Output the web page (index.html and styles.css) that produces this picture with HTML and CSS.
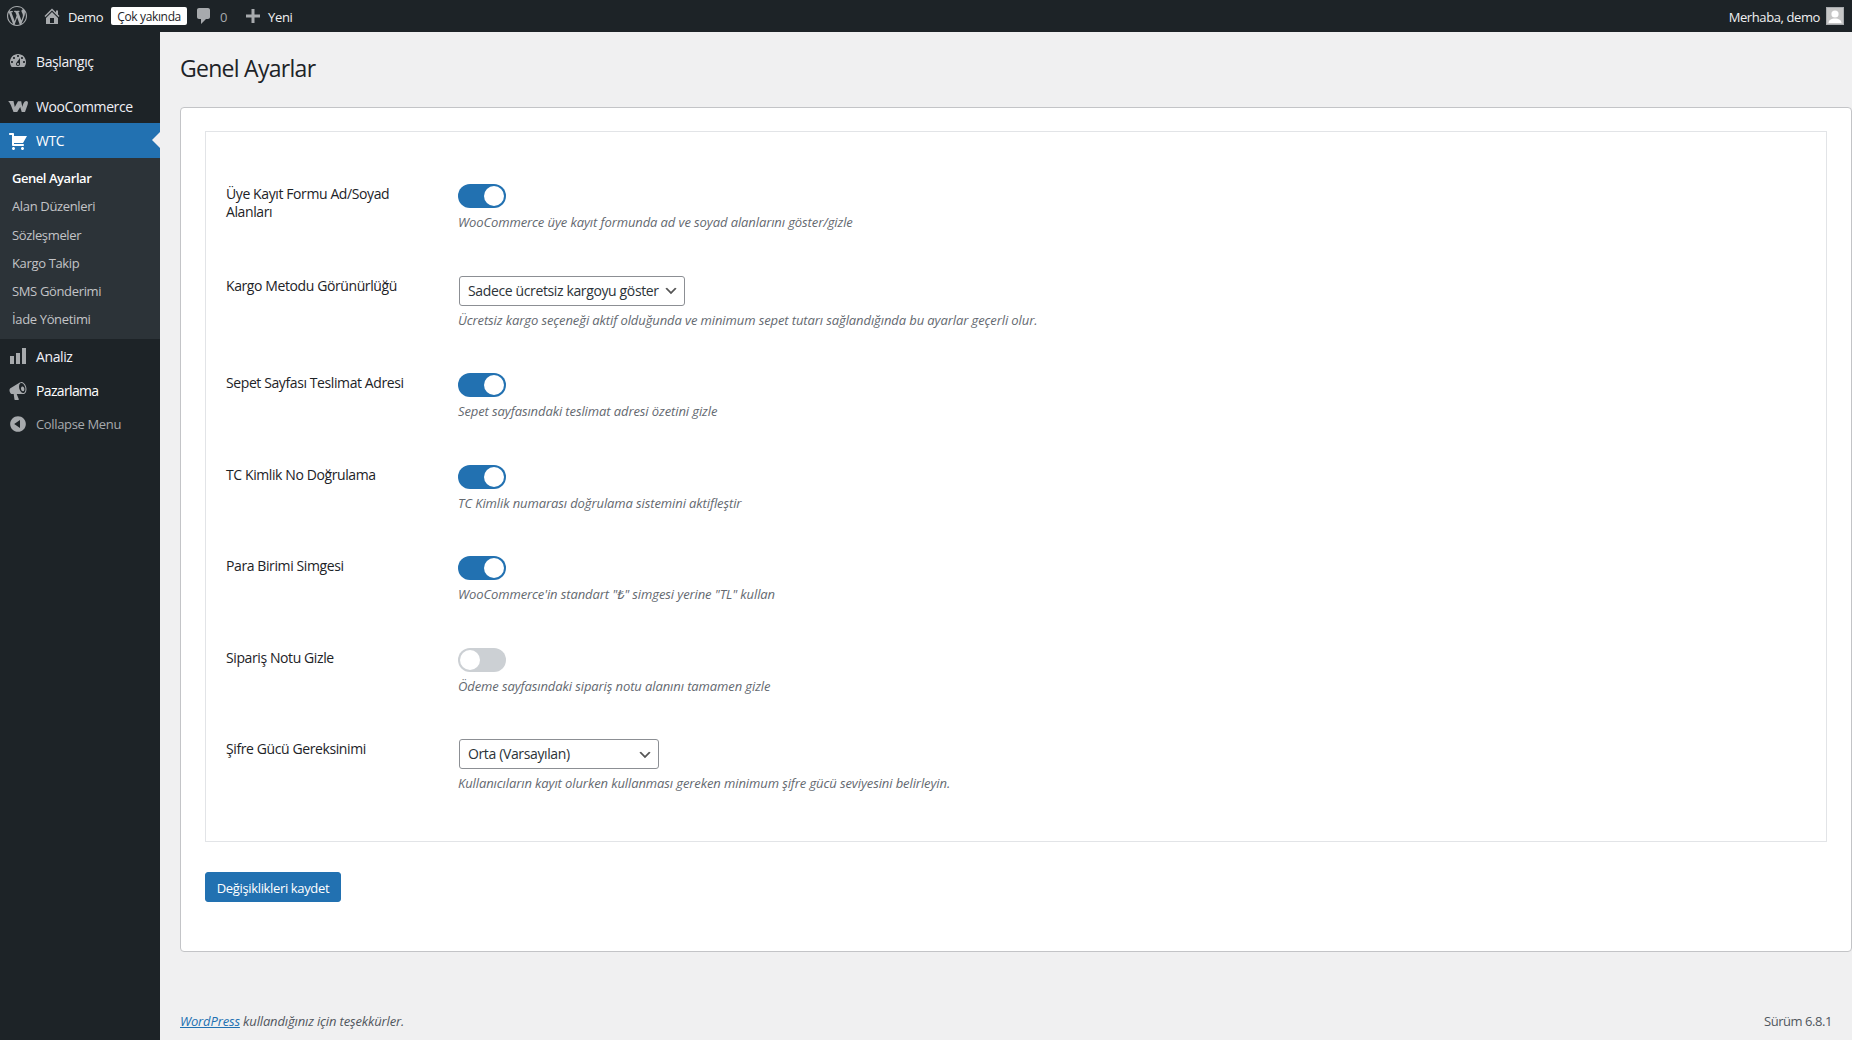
FILE: index.html
```html
<!DOCTYPE html>
<html lang="tr">
<head>
<meta charset="utf-8">
<title>Genel Ayarlar</title>
<link rel="stylesheet" href="styles.css">
</head>
<body>
<header class="adminbar">
  <div class="bar-group">
    <svg class="bar-wp" viewBox="0 0 20 20"><path d="M20 10c0-5.51-4.49-10-10-10C4.48 0 0 4.49 0 10c0 5.52 4.48 10 10 10 5.51 0 10-4.48 10-10zM7.78 15.37L4.37 6.22c.55-.02 1.17-.08 1.17-.08.5-.06.44-1.13-.06-1.11 0 0-1.45.11-2.37.11-.18 0-.37 0-.58-.01C4.12 2.69 6.87 1.11 10 1.11c2.33 0 4.45.87 6.05 2.34-.68-.11-1.65.39-1.65 1.58 0 .74.45 1.36.9 2.1.35.61.55 1.36.55 2.46 0 1.49-1.4 5-1.4 5l-3.03-8.37c.54-.02.82-.17.82-.17.5-.05.44-1.25-.06-1.22 0 0-1.44.12-2.38.12-.87 0-2.33-.12-2.33-.12-.5-.03-.56 1.2-.06 1.22l.92.08 1.26 3.41zM17.41 10c.24-.64.74-1.87.43-4.25.7 1.29 1.05 2.71 1.05 4.25 0 3.29-1.73 6.24-4.4 7.78.97-2.59 1.94-5.2 2.92-7.78zM6.1 18.09C3.12 16.65 1.11 13.53 1.11 10c0-1.3.23-2.48.72-3.59C3.25 10.3 4.67 14.2 6.1 18.09zm4.03-6.63l2.58 6.98c-.86.29-1.76.45-2.71.45-.79 0-1.57-.11-2.29-.33.81-2.38 1.62-4.74 2.42-7.1z"/></svg>
    <svg class="bar-home" viewBox="0 0 20 20"><path d="M16 8.5l1.53 1.53-1.06 1.06L10 4.62l-6.47 6.47-1.06-1.06L10 2.5l4 4v-2h2v4zm-6-2.46l6 5.99V18H4v-5.97zM12 17v-5H8v5h4z"/></svg>
    <span class="bar-demo">Demo</span>
    <span class="bar-badge">Çok yakında</span>
    <svg class="bar-comment" viewBox="0 0 20 20"><path d="M5 2h9c1.1 0 2 .9 2 2v7c0 1.1-.9 2-2 2h-2l-5 5v-5H5c-1.1 0-2-.9-2-2V4c0-1.1.9-2 2-2z"/></svg>
    <span class="bar-count">0</span>
    <svg class="bar-plus" viewBox="0 0 20 20"><path d="M17 8.5v3h-5.500V17h-3v-5.500H3v-3h5.500V3h3v5.500z"/></svg>
    <span class="bar-new">Yeni</span>
  </div>
  <div class="bar-group">
    <span class="bar-hello">Merhaba, demo</span>
    <svg class="bar-avatar" viewBox="0 0 18 18"><rect width="18" height="18" fill="#c6c6c6"/><rect x=".5" y=".5" width="17" height="17" fill="none" stroke="#a7aaad"/><circle cx="9" cy="7" r="3.6" fill="#fff"/><path d="M2.500 16c.2-3 2.600-4.600 6.500-4.600s6.300 1.600 6.500 4.600z" fill="#fff"/></svg>
  </div>
</header>
<div class="shell">
  <nav class="sidebar">
    <a class="menu-item menu-dash"><svg viewBox="0 0 20 20"><path d="M3.76 16h12.48c1.1-1.37 1.76-3.11 1.76-5 0-4.42-3.58-8-8-8s-8 3.58-8 8c0 1.89.66 3.63 1.76 5zM10 4c.55 0 1 .45 1 1s-.45 1-1 1-1-.45-1-1 .45-1 1-1zM6 6c.55 0 1 .45 1 1s-.45 1-1 1-1-.45-1-1 .45-1 1-1zm8 0c.55 0 1 .45 1 1s-.45 1-1 1-1-.45-1-1 .45-1 1-1zm-5.37 5.55L12 7v6c0 1.1-.9 2-2 2s-2-.9-2-2c0-.57.24-1.08.63-1.45zM4 10c.55 0 1 .45 1 1s-.45 1-1 1-1-.45-1-1 .45-1 1-1zm12 0c.55 0 1 .45 1 1s-.45 1-1 1-1-.45-1-1 .45-1 1-1zm-5 3c0-.55-.45-1-1-1s-1 .45-1 1 .45 1 1 1 1-.45 1-1z"/></svg><span class="menu-text">Başlangıç</span></a>
    <a class="menu-item menu-woo"><svg viewBox="0 0 20 11"><path d="M0 0h5.500l1.300 6L10 .3h3.200l1.100 5.700C15 3.500 16 0 18.300 0c1.700 0 2 1.700 1.200 4l-2.500 7h-3.300l-1.500-5-3 5H5.500L3 4.500C2.300 2.700 1.300 1 0 0z"/></svg><span class="menu-text">WooCommerce</span></a>
    <a class="menu-item menu-current"><svg viewBox="0 0 20 20"><path d="M6 13h9c.55 0 1 .45 1 1s-.45 1-1 1H5c-.55 0-1-.45-1-1V4H2c-.55 0-1-.45-1-1s.45-1 1-1h3c.55 0 1 .45 1 1v2h13l-4 7H6v1zm-.5 3c.83 0 1.500.67 1.500 1.500S6.330 19 5.500 19 4 18.330 4 17.500 4.670 16 5.500 16zm9 0c.83 0 1.500.67 1.500 1.500s-.67 1.500-1.500 1.500-1.500-.67-1.500-1.500.67-1.500 1.500-1.500z"/></svg><span class="menu-text">WTC</span></a>
    <div class="submenu">
      <a class="sub-item sub-current">Genel Ayarlar</a>
      <a class="sub-item">Alan Düzenleri</a>
      <a class="sub-item">Sözleşmeler</a>
      <a class="sub-item">Kargo Takip</a>
      <a class="sub-item">SMS Gönderimi</a>
      <a class="sub-item">İade Yönetimi</a>
    </div>
    <a class="menu-item menu-analiz"><svg viewBox="0 0 20 20"><path d="M18 18V2h-4v16h4zm-6 0V7H8v11h4zm-6 0v-8H2v8h4z"/></svg><span class="menu-text">Analiz</span></a>
    <a class="menu-item menu-white"><svg viewBox="0 0 20 20"><path d="M18.150 5.940c.46 1.620.38 3.220-.02 4.480-.42 1.280-1.260 2.180-2.300 2.480-.16.06-.26.06-.4.06l-.4.040H8.700l2.220 5.500c.02.14-.6.260-.14.340-.8.1-.24.160-.34.160H6.950c-.1 0-.26-.06-.34-.16-.08-.08-.16-.2-.14-.34l-.8-5.500H4.250c-.5.06-1.080-.18-1.540-.62s-.88-1.080-1.060-1.880c-.24-.8-.2-1.560-.02-2.200.18-.62.58-1.080 1.160-1.300l9.020-5.420c.28-.18.600-.3.920-.38 1.040-.3 2.240.1 3.220.98.980.86 1.820 2.160 2.200 3.780zm-2.580 5.980c.4-.1.740-.34 1.040-.7.580-.7.860-1.760.860-3.040 0-.64-.1-1.300-.28-1.980-.34-1.360-1.020-2.500-1.780-3.240s-1.680-1.100-2.460-.88c-.82.220-1.400.960-1.700 2-.32 1.040-.28 2.360.06 3.720.38 1.360 1 2.500 1.800 3.240.78.740 1.620 1.100 2.460.88zm-1.400-6.400c.9-.24 1.860.62 2.140 1.920.28 1.300-.2 2.520-1.100 2.760-.9.240-1.860-.62-2.140-1.920-.28-1.300.2-2.520 1.100-2.760z" fill-rule="evenodd"/></svg><span class="menu-text">Pazarlama</span></a>
    <a class="menu-item menu-collapse"><svg viewBox="0 0 20 20"><path d="M10 2.160c4.330 0 7.840 3.510 7.840 7.840s-3.510 7.840-7.840 7.840S2.160 14.330 2.160 10 5.710 2.160 10 2.160zm2 11.720V6.120L6.180 9.970z"/></svg><span class="menu-text">Collapse Menu</span></a>
  </nav>
  <div class="content">
    <h1 class="page-title">Genel Ayarlar</h1>
    <main class="panel">
      <section class="settings-box">
        <div class="row">
          <div class="row-label">Üye Kayıt Formu Ad/Soyad Alanları</div>
          <div class="row-field">
            <span class="switch switch-on"></span>
            <p class="desc">WooCommerce üye kayıt formunda ad ve soyad alanlarını göster/gizle</p>
          </div>
        </div>
        <div class="row">
          <div class="row-label">Kargo Metodu Görünürlüğü</div>
          <div class="row-field">
            <select class="select select-wide"><option>Sadece ücretsiz kargoyu göster</option></select>
            <p class="desc">Ücretsiz kargo seçeneği aktif olduğunda ve minimum sepet tutarı sağlandığında bu ayarlar geçerli olur.</p>
          </div>
        </div>
        <div class="row">
          <div class="row-label">Sepet Sayfası Teslimat Adresi</div>
          <div class="row-field">
            <span class="switch switch-on"></span>
            <p class="desc">Sepet sayfasındaki teslimat adresi özetini gizle</p>
          </div>
        </div>
        <div class="row">
          <div class="row-label">TC Kimlik No Doğrulama</div>
          <div class="row-field">
            <span class="switch switch-on"></span>
            <p class="desc">TC Kimlik numarası doğrulama sistemini aktifleştir</p>
          </div>
        </div>
        <div class="row">
          <div class="row-label">Para Birimi Simgesi</div>
          <div class="row-field">
            <span class="switch switch-on"></span>
            <p class="desc">WooCommerce'in standart "₺" simgesi yerine "TL" kullan</p>
          </div>
        </div>
        <div class="row">
          <div class="row-label">Sipariş Notu Gizle</div>
          <div class="row-field">
            <span class="switch"></span>
            <p class="desc">Ödeme sayfasındaki sipariş notu alanını tamamen gizle</p>
          </div>
        </div>
        <div class="row">
          <div class="row-label">Şifre Gücü Gereksinimi</div>
          <div class="row-field">
            <select class="select select-narrow"><option>Orta (Varsayılan)</option></select>
            <p class="desc">Kullanıcıların kayıt olurken kullanması gereken minimum şifre gücü seviyesini belirleyin.</p>
          </div>
        </div>
      </section>
      <button class="save" type="button">Değişiklikleri kaydet</button>
    </main>
    <footer class="footer">
      <span class="footer-thanks"><a class="footer-link">WordPress</a> kullandığınız için teşekkürler.</span>
      <span class="footer-version">Sürüm 6.8.1</span>
    </footer>
  </div>
</div>
</body>
</html>
```
FILE: styles.css
```css
* { box-sizing: border-box; }
html, body { margin: 0; height: 100%; }
body {
  font-family: "Open Sans", "Noto Sans", sans-serif;
  font-size: 13px;
  line-height: 1.4;
  color: #3c434a;
  background: #f0f0f1;
  overflow: hidden;
  letter-spacing: -0.35px;
}
.adminbar {
  height: 32px;
  background: #1d2327;
  color: #f0f0f1;
  display: flex;
  justify-content: space-between;
  align-items: center;
  padding: 0 8px 0 7px;
  font-size: 13px;
}
.bar-group { display: flex; align-items: center; }
.adminbar span { padding-top: 2px; }
.adminbar svg { fill: #a7aaad; flex: none; }
.bar-wp { width: 20px; height: 20px; margin-right: 16px; }
.bar-home { width: 20px; height: 20px; margin-left: -1px; margin-right: 6px; }
.bar-demo { margin-right: 8px; }
.adminbar .bar-badge {
  background: #fff;
  color: #1d2327;
  border-radius: 2px;
  height: 18px;
  line-height: 18px;
  padding: 1px 6px 0;
  font-size: 12px;
  margin-right: 7px;
}
.bar-comment { width: 20px; height: 20px; margin-right: 6px; }
.bar-count { color: #a7aaad; margin-right: 16px; }
.bar-plus { width: 20px; height: 20px; margin-right: 5px; }
.bar-hello { margin-right: 6px; letter-spacing: -0.4px; }
.adminbar .bar-avatar { width: 18px; height: 18px; }
.shell { display: flex; height: 1008px; }
.sidebar {
  width: 160px;
  flex: none;
  background: #1d2327;
  padding-top: 12px;
}
.menu-item {
  display: flex;
  align-items: center;
  height: 34px;
  padding-left: 8px;
  font-size: 14px;
  color: #f0f0f6;
}
.menu-text { padding-top: 2px; letter-spacing: -0.4px; }
.menu-item svg { width: 20px; height: 20px; fill: #a7aaad; margin-right: 8px; flex: none; }
.menu-dash { margin-bottom: 11px; }
.menu-woo svg { height: 11px; }
.menu-current {
  position: relative;
  height: 35px;
  background: #2271b1;
  color: #fff;
}
.menu-current .menu-text { padding-top: 0; }
.menu-current svg { fill: #fff; }
.menu-current::after {
  content: "";
  position: absolute;
  right: 0;
  top: 9px;
  border: 8px solid transparent;
  border-right-color: #f0f0f1;
  border-left-width: 0;
}
.submenu {
  background: #2c3338;
  height: 181px;
  padding-top: 7px;
}
.sub-item {
  display: block;
  height: 28.3px;
  line-height: 26px;
  padding-left: 12px;
  font-size: 13px;
  color: #c3c4c7;
}
.sub-current { color: #fff; font-weight: 600; letter-spacing: -0.45px; }
.menu-analiz { height: 34px; }
.menu-analiz .menu-text { padding-top: 1px; }
.menu-white { height: 35px; color: #fff; }
.menu-white .menu-text { padding-top: 1px; letter-spacing: -0.65px; }
.menu-collapse { height: 31px; font-size: 13px; color: #a7aaad; }
.menu-collapse .menu-text { padding-top: 1px; letter-spacing: -0.35px; }
.content {
  flex: 1;
  min-width: 0;
  padding-left: 20px;
  display: flex;
  flex-direction: column;
}
.page-title {
  margin: 0;
  padding-top: 18px;
  height: 75px;
  font-size: 23px;
  font-weight: 400;
  line-height: 36px;
  color: #1d2327;
  letter-spacing: -0.72px;
}
.panel {
  height: 845px;
  background: #fff;
  border: 1px solid #c3c4c7;
  border-radius: 4px;
  padding: 23px 24px 0;
}
.settings-box {
  height: 711px;
  border: 1px solid #e2e4e7;
  padding: 32px 20px 0;
}
.row { display: flex; padding: 20px 0; }
.row-label {
  width: 232px;
  flex: none;
  padding: 1px 40px 0 0;
  font-size: 14px;
  line-height: 18.2px;
  color: #1d2327;
  letter-spacing: -0.4px;
}
.row-field { flex: 1; min-width: 0; }
.switch {
  display: block;
  position: relative;
  width: 48px;
  height: 24px;
  border-radius: 12px;
  background: #ccd0d4;
}
.switch::before {
  content: "";
  position: absolute;
  top: 2px;
  left: 2px;
  width: 20px;
  height: 20px;
  border-radius: 50%;
  background: #fff;
}
.switch-on { background: #2271b1; }
.switch-on::before { left: 26px; }
.desc {
  margin: 5px 0 3px;
  font-size: 13px;
  line-height: 19.5px;
  font-style: italic;
  color: #646970;
  letter-spacing: -0.1px;
}
.select {
  display: block;
  height: 30px;
  margin-left: 1px;
  padding: 0 24px 0 8px;
  border: 1px solid #8c8f94;
  border-radius: 3px;
  font: inherit;
  font-size: 14px;
  letter-spacing: -0.37px;
  color: #2c3338;
  appearance: none;
  background: #fff url("data:image/svg+xml,%3Csvg xmlns='http://www.w3.org/2000/svg' viewBox='0 0 20 20'%3E%3Cpath d='M5 6l5 5 5-5 2 1-7 7-7-7z' fill='%23555'/%3E%3C/svg%3E") no-repeat right 5px top 55%;
  background-size: 16px 16px;
}
.select-wide { width: 226px; }
.select-narrow { width: 200px; }
.save {
  display: block;
  margin-top: 30px;
  width: 136px;
  height: 30px;
  border: 1px solid #2271b1;
  border-radius: 3px;
  background: #2271b1;
  color: #fff;
  font: inherit;
  letter-spacing: inherit;
  padding: 2px 0 0;
}
.footer {
  margin-top: auto;
  height: 28px;
  display: flex;
  justify-content: space-between;
  padding-right: 20px;
  color: #50575e;
}
.footer-thanks { font-style: italic; letter-spacing: -0.15px; }
.footer-version { letter-spacing: -0.45px; }
.footer-link { color: #2271b1; text-decoration: underline; }
```
